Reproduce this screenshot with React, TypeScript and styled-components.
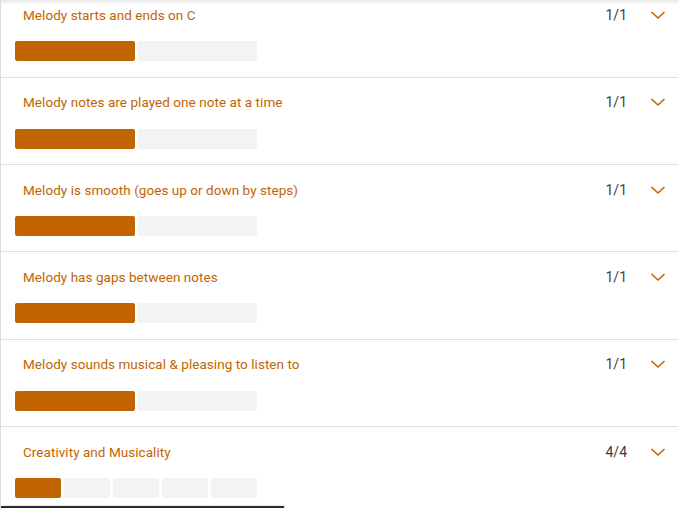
import React from "react";
import styled, { createGlobalStyle } from "styled-components";

const Global = createGlobalStyle`
  html, body { margin: 0; padding: 0; background: #fff; }
  body { font-family: Roboto, "Noto Sans", Arial, sans-serif; overflow: hidden; }
`;

const Frame = styled.div`
  position: relative;
  width: 678px;
  height: 508px;
  overflow: hidden;
  background: #fff;
  border-left: 1px solid #dadce0;
  box-sizing: border-box;
`;

const TopShadow = styled.div`
  position: absolute;
  left: 0;
  right: 0;
  top: 0;
  height: 5px;
  background: linear-gradient(to bottom, rgba(0, 0, 0, 0.09), rgba(0, 0, 0, 0));
  pointer-events: none;
`;

const BottomEdge = styled.div`
  position: absolute;
  left: 0;
  bottom: 0;
  width: 283px;
  height: 2px;
  background: #2b2b2b;
  box-shadow: 1px 0 2px rgba(0, 0, 0, 0.25);
`;

const List = styled.div`
  display: flex;
  flex-direction: column;
  margin-top: -9.8px;
`;

const Row = styled.div`
  display: flex;
  flex-direction: column;
  padding: 15.6px 0 15.4px 14px;
  border-bottom: 1px solid #e0e0e0;
`;

const Header = styled.div`
  display: flex;
  align-items: center;
  height: 18px;
  padding-left: 8px;
`;

const Title = styled.div`
  flex: 1;
  font-size: 13.5px;
  font-weight: 400;
  color: #c26401;
  letter-spacing: 0.05px;
`;

const Score = styled.div`
  font-size: 14px;
  font-weight: 400;
  color: #3c4043;
  width: 40px;
  text-align: right;
  margin-right: 23px;
`;

const Chevron = styled.svg`
  width: 16px;
  height: 16px;
  margin-right: 12px;
  flex: none;
`;

const Bars = styled.div`
  display: flex;
  gap: 3px;
  width: 242px;
  margin-top: 17.4px;
`;

const Segment = styled.div<{ $on: boolean }>`
  flex: 1;
  height: 20px;
  border-radius: 2px;
  background: ${(p) => (p.$on ? "#c26401" : "#f1f3f4")};
`;

const items = [
  { title: "Melody starts and ends on C", score: "1/1", segs: 2, on: 1 },
  { title: "Melody notes are played one note at a time", score: "1/1", segs: 2, on: 1 },
  { title: "Melody is smooth (goes up or down by steps)", score: "1/1", segs: 2, on: 1 },
  { title: "Melody has gaps between notes", score: "1/1", segs: 2, on: 1 },
  { title: "Melody sounds musical & pleasing to listen to", score: "1/1", segs: 2, on: 1 },
  { title: "Creativity and Musicality", score: "4/4", segs: 5, on: 1 },
];

export default function App() {
  return (
    <>
      <Global />
      <Frame>
        <List>
          {items.map((it, i) => (
            <Row key={i}>
              <Header>
                <Title>{it.title}</Title>
                <Score>{it.score}</Score>
                <Chevron viewBox="0 0 16 16">
                  <polyline
                    points="1.5,5 8,11 14.5,5"
                    fill="none"
                    stroke="#c26401"
                    strokeWidth="1.6"
                  />
                </Chevron>
              </Header>
              <Bars>
                {Array.from({ length: it.segs }).map((_, j) => (
                  <Segment key={j} $on={j < it.on} />
                ))}
              </Bars>
            </Row>
          ))}
        </List>
        <TopShadow />
        <BottomEdge />
      </Frame>
    </>
  );
}
